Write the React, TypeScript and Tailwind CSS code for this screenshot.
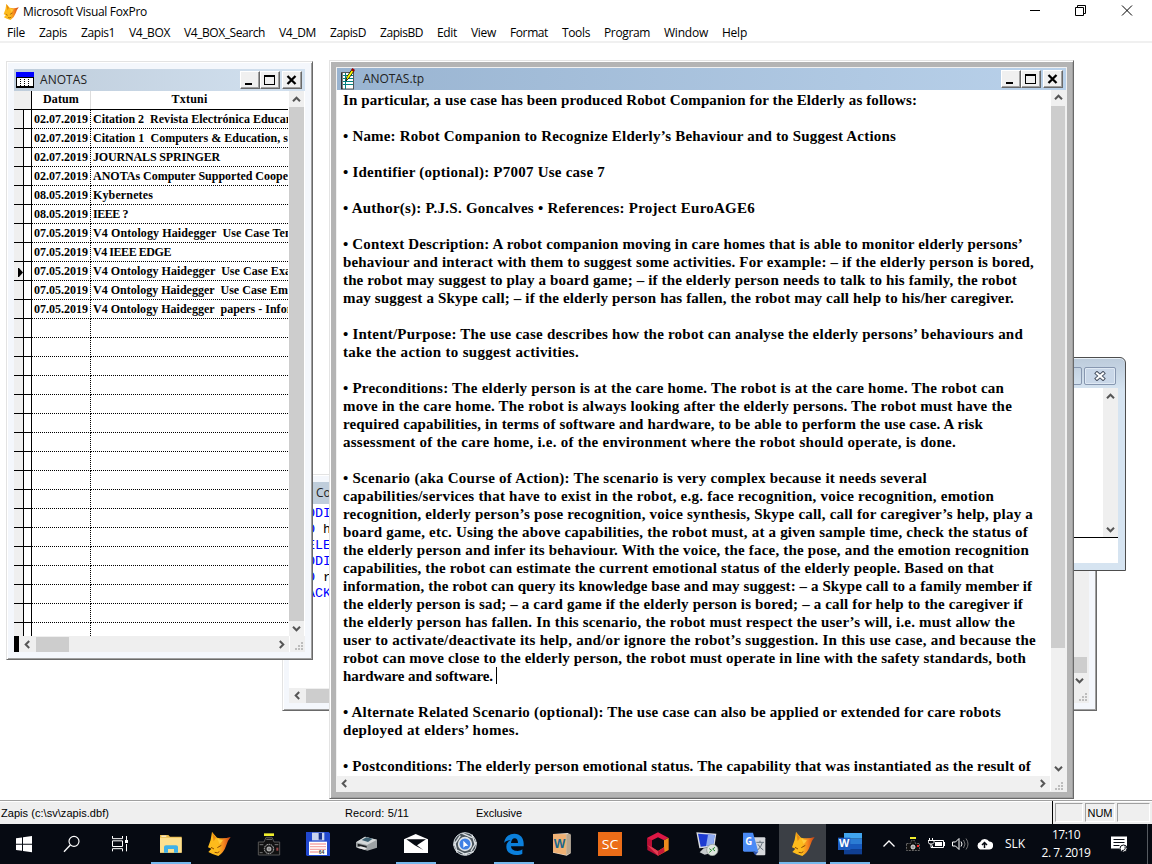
import { ReactNode, useLayoutEffect, useRef, useState } from 'react';
import clsx from 'clsx';

const UI = "font-['Open_Sans','Noto_Sans',sans-serif]";
const SERIF = "font-['Liberation_Serif',serif]";
const SANS = "font-['Liberation_Sans',sans-serif]";
const MONO = "font-['Liberation_Mono',monospace]";

// [text, width in px], an empty text is a blank line
const NOTE_LINES: [string, number][] = [
  ['In particular, a use case has been produced Robot Companion for the Elderly as follows:', 574],
  ['', 0],
  ['• Name: Robot Companion to Recognize Elderly’s Behaviour and to Suggest Actions', 553],
  ['', 0],
  ['• Identifier (optional): P7007 Use case 7', 262],
  ['', 0],
  ['• Author(s): P.J.S. Goncalves • References: Project EuroAGE6', 412],
  ['', 0],
  ['• Context Description: A robot companion moving in care homes that is able to monitor elderly persons’', 680],
  ['behaviour and interact with them to suggest some activities. For example: – if the elderly person is bored,', 691],
  ['the robot may suggest to play a board game; – if the elderly person needs to talk to his family, the robot', 674],
  ['may suggest a Skype call; – if the elderly person has fallen, the robot may call help to his/her caregiver.', 671],
  ['', 0],
  ['• Intent/Purpose: The use case describes how the robot can analyse the elderly persons’ behaviours and', 680],
  ['take the action to suggest activities.', 236],
  ['', 0],
  ['• Preconditions: The elderly person is at the care home. The robot is at the care home. The robot can', 661],
  ['move in the care home. The robot is always looking after the elderly persons. The robot must have the', 669],
  ['required capabilities, in terms of software and hardware, to be able to perform the use case. A risk', 640],
  ['assessment of the care home, i.e. of the environment where the robot should operate, is done.', 613],
  ['', 0],
  ['• Scenario (aka Course of Action): The scenario is very complex because it needs several', 584],
  ['capabilities/services that have to exist in the robot, e.g. face recognition, voice recognition, emotion', 651],
  ['recognition, elderly person’s pose recognition, voice synthesis, Skype call, call for caregiver’s help, play a', 690],
  ['board game, etc. Using the above capabilities, the robot must, at a given sample time, check the status of', 685],
  ['the elderly person and infer its behaviour. With the voice, the face, the pose, and the emotion recognition', 686],
  ['capabilities, the robot can estimate the current emotional status of the elderly people. Based on that', 651],
  ['information, the robot can query its knowledge base and may suggest: – a Skype call to a family member if', 689],
  ['the elderly person is sad; – a card game if the elderly person is bored; – a call for help to the caregiver if', 680],
  ['the elderly person has fallen. In this scenario, the robot must respect the user’s will, i.e. must allow the', 672],
  ['user to activate/deactivate its help, and/or ignore the robot’s suggestion. In this use case, and because the', 693],
  ['robot can move close to the elderly person, the robot must operate in line with the safety standards, both', 683],
  ['hardware and software.', 150],
  ['', 0],
  ['• Alternate Related Scenario (optional): The use case can also be applied or extended for care robots', 658],
  ['deployed at elders’ homes.', 176],
  ['', 0],
  ['• Postconditions: The elderly person emotional status. The capability that was instantiated as the result of', 688],
];
const CARET_LINE = 32;

const RECORDS: [string, string, number][] = [
  ['02.07.2019', 'Citation 2  Revista Electrónica Educar', 198],
  ['02.07.2019', 'Citation 1  Computers & Education, s', 195],
  ['02.07.2019', 'JOURNALS SPRINGER', 127],
  ['02.07.2019', 'ANOTAs Computer Supported Coope', 195],
  ['08.05.2019', 'Kybernetes', 60],
  ['08.05.2019', 'IEEE ?', 35],
  ['07.05.2019', 'V4 Ontology Haidegger  Use Case Tem', 202],
  ['07.05.2019', 'V4 IEEE EDGE', 78],
  ['07.05.2019', 'V4 Ontology Haidegger  Use Case Exa', 198],
  ['07.05.2019', 'V4 Ontology Haidegger  Use Case Em', 195],
  ['07.05.2019', 'V4 Ontology Haidegger  papers - Infor', 199],
];
const CURRENT_RECORD = 8;
const ROW_COUNT = 28;

const MENU: [string, string, number][] = [
  ['File', 'w-8', 18],
  ['Zapis', 'w-[42px]', 28],
  ['Zapis1', 'w-12', 34],
  ['V4_BOX', 'w-[55px]', 41],
  ['V4_BOX_Search', 'w-[95px]', 81],
  ['V4_DM', 'w-[51px]', 37],
  ['ZapisD', 'w-[50px]', 36],
  ['ZapisBD', 'w-[57px]', 43],
  ['Edit', 'w-[34px]', 20],
  ['View', 'w-[39px]', 25],
  ['Format', 'w-[52px]', 38],
  ['Tools', 'w-[42px]', 28],
  ['Program', 'w-[60px]', 46],
  ['Window', 'w-[58px]', 44],
  ['Help', 'w-[30px]', 25],
];

// Spreads the letters so that the text takes exactly `width` pixels
function Fit({ text, width, className }: { text: string; width: number; className?: string }) {
  const ref = useRef<HTMLSpanElement>(null);
  const [spacing, setSpacing] = useState(0);

  useLayoutEffect(() => {
    if (!ref.current || !text) return;
    const natural = ref.current.getBoundingClientRect().width;
    setSpacing((width - natural) / text.length);
  }, [text, width]);

  return (
    <span ref={ref} className={clsx('inline-block whitespace-pre', className)} style={{ letterSpacing: spacing }}>
      {text}
    </span>
  );
}

function Arrow({ dir }: { dir: 'up' | 'down' | 'left' | 'right' }) {
  const rotate = { up: 0, right: 90, down: 180, left: 270 }[dir];
  return (
    <svg width="9" height="9" viewBox="0 0 9 9" className="shrink-0">
      <path d="M1 6.2 4.5 2.7 8 6.2" fill="none" stroke="#555" strokeWidth="2" transform={`rotate(${rotate} 4.5 4.5)`} />
    </svg>
  );
}

function Grip() {
  const dots = [[6, 0], [3, 3], [6, 3], [0, 6], [3, 6], [6, 6]];
  return (
    <svg width="9" height="9" className="shrink-0">
      {dots.map(([x, y]) => (
        <rect key={`${x}-${y}`} x={x} y={y} width="2" height="2" fill="#bdbdbd" />
      ))}
    </svg>
  );
}

function WindowButton({ kind }: { kind: 'min' | 'max' | 'close' }) {
  return (
    <button className="flex h-[18px] w-5 items-center justify-center border border-t-white border-l-white border-r-[#696969] border-b-[#696969] bg-[#f0f0f0] shadow-[inset_-1px_-1px_0_#a0a0a0]">
      <svg width="12" height="12" viewBox="0 0 12 12" shapeRendering="crispEdges">
        {kind === 'min' && <rect x="1" y="9" width="7" height="2" />}
        {kind === 'max' && <path d="M.5 2H10.5M.5 1V10.5H10.5V1" fill="none" stroke="#000" strokeWidth="1" />}
        {kind === 'max' && <rect x="0" y="1" width="11" height="2" />}
        {kind === 'close' && <path d="M1.500 2 9.500 10M9.500 2 1.500 10" stroke="#000" strokeWidth="2.300" shapeRendering="auto" />}
      </svg>
    </button>
  );
}

function TitleBar({ icon, className, children }: { icon: ReactNode; className: string; children: ReactNode }) {
  return (
    <div className={clsx('flex h-[22px] shrink-0 items-center', className)}>
      {icon}
      <div className={clsx('flex-1 text-xs text-[#222]', UI)}>{children}</div>
      <div className="mr-[3px] flex">
        <WindowButton kind="min" />
        <WindowButton kind="max" />
        <div className="w-0.5" />
        <WindowButton kind="close" />
      </div>
    </div>
  );
}

function TableIcon() {
  return (
    <svg width="18" height="16" viewBox="0 0 18 16" shapeRendering="crispEdges" className="mr-1.5 ml-0.5">
      <rect width="18" height="16" fill="#000" />
      <rect width="18" height="5" fill="#00f" />
      <rect x="1" y="6" width="3" height="8" fill="#fff" />
      <rect x="5" y="6" width="3" height="8" fill="#fff" />
      <rect x="9" y="6" width="3" height="8" fill="#fff" />
      <rect x="13" y="6" width="4" height="8" fill="#fff" />
      <path d="M4.500 6v8M8.500 6v8M12.500 6v8" stroke="#fff" strokeDasharray="1 1" />
    </svg>
  );
}

function NoteIcon() {
  return (
    <svg width="14" height="22" viewBox="0 0 14 22" className="mr-2 ml-1">
      <rect x=".5" y="4.500" width="12" height="16.500" fill="#fff" stroke="#555" />
      <path d="M1 5v16" stroke="#000" />
      <path d="M2 7.500h10M2 10.500h10M2 13.500h10M2 16.500h10M4.500 5v16" stroke="#008080" />
      <path d="M5 13 6 8.500 11 1.500 13 3 8 10z" fill="#ff0" stroke="#000" strokeWidth=".8" />
      <path d="m10 2 1.500-2L14 2l-1.500 2z" fill="#900" />
    </svg>
  );
}

function BrowseWindow() {
  return (
    <div className="absolute top-[61px] left-[6px] flex h-[599px] w-[307px] flex-col border border-t-[#e3e3e3] border-l-[#e3e3e3] border-r-[#696969] border-b-[#696969] bg-[#f4f7fc] pt-[7px] pr-[7px] pb-1.5 pl-[7px] shadow-[inset_1px_1px_0_#fff,inset_-1px_-1px_0_#a0a0a0]">
      <TitleBar icon={<TableIcon />} className="bg-linear-to-r from-[#bfcddb] to-[#d2e1f0]">
        <Fit text="ANOTAS" width={47} />
      </TitleBar>
      <div className={clsx('flex h-[545px] bg-white text-xs font-bold', SERIF)}>
        <div className="w-[274px] overflow-hidden">
          <div className="flex h-[19px] border-b border-black leading-[17px]">
            <div className="w-[18px] border-r border-black bg-[#efefef]" />
            <div className="w-[59px] border-r border-[#ddd] text-center">
              <Fit text="Datum" width={36} />
            </div>
            <div className="flex-1 text-center">
              <Fit text="Txtuni" width={36} />
            </div>
          </div>
          {Array.from({ length: ROW_COUNT }, (_, i) => (
            <div key={i} className="flex h-[19px] leading-[19px]">
              <div className="flex w-[10px] items-center justify-end border-r border-b border-black bg-[#efefef] pt-0.5">
                {i === CURRENT_RECORD && (
                  <svg width="5" height="9">
                    <path d="M0 0h1l4 4.500L1 9H0z" />
                  </svg>
                )}
              </div>
              <div className="w-2 border-r border-b border-black" />
              <div className="w-[59px] border-r border-b border-dotted border-black pl-[2px] whitespace-nowrap">
                {RECORDS[i] && <Fit text={RECORDS[i][0]} width={54} />}
              </div>
              <div className="h-[19px] flex-1 overflow-hidden border-b border-dotted border-black pl-[2px] whitespace-nowrap">
                {RECORDS[i] && <Fit text={RECORDS[i][1]} width={RECORDS[i][2]} />}
              </div>
            </div>
          ))}
        </div>
        <div className="ml-px flex w-[15px] flex-col items-center bg-[#efefef] pt-1">
          <Arrow dir="up" />
          <div className="mt-[3px] h-[514px] w-full bg-[#cdcdcd]" />
          <div className="mt-[3px]">
            <Arrow dir="down" />
          </div>
        </div>
      </div>
      <div className="z-10 flex h-4 items-center bg-[#efefef]">
        <div className="h-full w-[5px] bg-black" />
        <div className="w-1" />
        <Arrow dir="left" />
        <div className="ml-1 h-[15px] w-[33px] bg-[#cdcdcd]" />
        <div className="flex-1" />
        <Arrow dir="right" />
        <div className="ml-[3px] h-full w-px bg-white" />
        <div className="mr-px ml-[5px] pt-1">
          <Grip />
        </div>
      </div>
    </div>
  );
}

function CommandWindow() {
  const commands: [string, string][] = [
    ['MODI', ''],
    ['DO', ' h'],
    ['SELE', ''],
    ['MODI', ''],
    ['DO', ' r'],
    ['PACK', ''],
  ];
  return (
    <div className="absolute top-[474px] left-[282px] flex h-[237px] w-[815px] flex-col border border-t-[#e3e3e3] border-l-[#e3e3e3] border-r-[#696969] border-b-[#696969] bg-[#f4f7fc] pt-[7px] pr-[7px] pb-1.5 pl-1.5 shadow-[inset_1px_1px_0_#fff,inset_-1px_-1px_0_#a0a0a0]">
      <div className={clsx('h-[22px] bg-[#bfcddb] pl-[27px] text-xs leading-[21px] text-[#222]', UI)}>Co</div>
      <div className="flex h-[184px] bg-white">
        <div className={clsx('flex-1 pt-0.5 pl-[10px] text-[13.33px] leading-4', MONO)}>
          {commands.map(([keyword, rest], i) => (
            <div key={i} className="whitespace-pre">
              <span className="text-[#0000ff]">{keyword}</span>
              {rest}
            </div>
          ))}
        </div>
        <div className="flex w-[17px] flex-col items-center justify-end bg-[#efefef] pr-0.5 pb-[3px]">
          <div className="mb-[3px] h-4 w-full bg-[#cdcdcd]" />
          <Arrow dir="down" />
        </div>
      </div>
      <div className="flex h-[15px] items-center bg-[#efefef] pr-px pl-1">
        <Arrow dir="left" />
        <div className="ml-1 h-[14px] w-24 bg-[#cdcdcd]" />
        <div className="flex-1" />
        <div className="pt-1">
          <Grip />
        </div>
      </div>
    </div>
  );
}

function ToolWindow() {
  return (
    <div className="absolute top-[357px] left-[900px] h-[214px] w-[226px] rounded-t-md border border-[#4d4d4d] bg-[#d6e4f1] bg-linear-to-b from-[#bccbdb] to-[#d6e4f1] to-15% pr-[7px] pb-[7px] shadow-[inset_0_1px_0_#e9f1f8]">
      <div className="flex h-[30px] items-start justify-end gap-0.5 pt-[9px] pr-[2px]">
        <div className="h-[18px] w-8 rounded-[2px] border border-[#8797b0]" />
        <div className="flex h-[18px] w-8 items-center justify-center rounded-[2px] border border-[#8797b0] bg-[#c9d7e8] shadow-[inset_0_0_0_1px_#dfe9f4]">
          <svg width="12" height="10" viewBox="0 0 12 10">
            <path d="m1.500 1 9 8M10.500 1l-9 8" stroke="#4c5666" strokeWidth="4" />
            <path d="m2.200 1.700 7.600 6.600M9.800 1.700 2.200 8.300" stroke="#fff" strokeWidth="2" />
          </svg>
        </div>
      </div>
      <div className="flex h-[149px] bg-white">
        <div className="flex-1" />
        <div className="flex w-[15px] flex-col items-center justify-between bg-[#efefef] pt-1 pb-[3px]">
          <Arrow dir="up" />
          <Arrow dir="down" />
        </div>
      </div>
      <div className="h-[26px] border-t border-black bg-white" />
    </div>
  );
}

function EditorWindow() {
  return (
    <div className="absolute top-[60px] left-[329px] flex h-[739px] w-[745px] flex-col border border-t-[#e3e3e3] border-l-[#e3e3e3] border-r-[#696969] border-b-[#696969] bg-[#b4b4b4] p-1.5 shadow-[inset_1px_1px_0_#fff,inset_-1px_-1px_0_#a0a0a0]">
      <div className="flex flex-1 flex-col border border-[#f0f0f0] bg-[#f0f0f0]">
        <TitleBar icon={<NoteIcon />} className="bg-linear-to-r from-[#99b4d1] to-[#b9d1ea]">
          <Fit text="ANOTAS.tp" width={61} />
        </TitleBar>
        <div className="flex h-[686px]">
          <div className={clsx('w-[714px] overflow-hidden bg-white pt-[1px] pl-1.5 text-[15px] leading-[18px] font-bold', SERIF)}>
            {NOTE_LINES.map(([text, width], i) => (
              <div key={i} className="flex h-[18px] whitespace-pre">
                <Fit text={text} width={width} />
                {i === CARET_LINE && <div className="ml-[3px] h-[17px] w-px bg-black" />}
              </div>
            ))}
          </div>
          <div className="flex w-[14px] flex-col items-center pt-[3px]">
            <Arrow dir="up" />
            <div className="mt-1 h-[542px] w-full bg-[#cdcdcd]" />
            <div className="flex-1" />
            <div className="mb-[3px]">
              <Arrow dir="down" />
            </div>
          </div>
        </div>
        <div className="flex flex-1 items-center pl-[3px]">
          <Arrow dir="left" />
          <div className="flex-1" />
          <Arrow dir="right" />
          <div className="ml-[3px] h-full w-px bg-white" />
          <div className="mr-0.5 ml-1 pt-1.5">
            <Grip />
          </div>
        </div>
      </div>
    </div>
  );
}

function FoxIcon({ size }: { size: number }) {
  return (
    <svg width={size} height={size} viewBox="0 0 72 72">
      <defs>
        <linearGradient id="fox" x1="0" y1="0" x2="1" y2="0">
          <stop offset=".45" stopColor="#fdbb1c" />
          <stop offset=".7" stopColor="#f58420" />
          <stop offset="1" stopColor="#c43d12" />
        </linearGradient>
      </defs>
      <path d="M15 0 30 17Q50 22 71 15 60 28 57 42 51 61 34 72 16 67 4 60L13 50 3 46Q13 24 15 0Z" fill="url(#fox)" />
      <path d="M15 0 27 17 20 28Z" fill="#e88b12" />
      <path d="m12 46 9 5M31 47l12-7M23 61q9 4 14-2" fill="none" stroke="#8c4a05" strokeWidth="3" />
      <path d="M31 20q12 5 17 5L38 37Z" fill="#ffcc3a" />
    </svg>
  );
}

function Icon({ children, size = 24 }: { children: ReactNode; size?: number }) {
  return (
    <svg width={size} height={size} viewBox="0 0 72 72">
      {children}
    </svg>
  );
}

const startIcon = (
  <Icon>
    <path d="M12 19 30 16.500V35H12ZM33 16 60 12V35H33ZM12 38H30V56.500L12 54ZM33 38H60V61L33 57Z" fill="#fff" />
  </Icon>
);
const searchIcon = (
  <Icon>
    <circle cx="42" cy="28" r="15" fill="none" stroke="#fff" strokeWidth="3.500" />
    <path d="M31 39 12 59" stroke="#fff" strokeWidth="4" />
  </Icon>
);
const taskViewIcon = (
  <Icon>
    <path d="M13.500 12v8h30v-8M13.500 58v-8h30v8M13.500 26.500h30v17h-30zM55.500 12v12M55.500 36v22" fill="none" stroke="#fff" strokeWidth="3" />
    <path d="M51 24h9v9h-9z" fill="#fff" />
  </Icon>
);
const explorerIcon = (
  <Icon>
    <path d="M3 9h25l5 5h35v48H3z" fill="#e9b949" />
    <path d="M3 17h65v45H3z" fill="#fde08f" />
    <path d="M15 62V45q0-5 6-5h30q6 0 6 5v17H45V51H27v11z" fill="#3fb1e8" />
    <path d="M7 11h15v3H7z" fill="#fff" />
  </Icon>
);
const cameraIcon = (
  <Icon>
    <path d="M21 4h30v8H21z" fill="#f0ee2e" />
    <path d="M27 16h18l6 14h17v39H4V30h17z" fill="#111" stroke="#555" strokeWidth="3" />
    <circle cx="36" cy="51" r="14" fill="#222" stroke="#bbb" strokeWidth="3" strokeDasharray="5 2" />
    <circle cx="36" cy="51" r="6" fill="#888" stroke="#eee" strokeWidth="2" />
    <path d="M8 38h11M53 38h11M28 22h17M8 62h9" stroke="#777" strokeWidth="3" />
    <path d="M58 47h6v9h-6z" fill="#944" />
  </Icon>
);
const floppyIcon = (
  <Icon>
    <path d="M0 0h68l4 4v68H3l-3-3z" fill="#2148cf" />
    <path d="M18 2h37v23H18z" fill="#c9d4ee" />
    <path d="M38 3h10v20H38z" fill="#17318e" />
    <path d="M9 29h54v40H9z" fill="#fff" />
    <path d="M12 36h48M12 44h48M12 52h48M12 60h25" stroke="#f3a9a9" strokeWidth="4" />
    <text x="38" y="67" fontSize="15" fontWeight="bold" fontFamily="Liberation Sans" fill="#333">64</text>
  </Icon>
);
const scannerIcon = (
  <Icon>
    <path d="m3 31 27-17 36 9v24L37 56 3 46z" fill="#9da2a4" />
    <path d="m3 31 27-17 36 9-30 16z" fill="#d3d7d8" />
    <path d="m20 24 14-8 19 4-14 10z" fill="#3c5f70" />
    <path d="m8 35 27 7v7L8 43z" fill="#1b1f21" />
    <path d="m5 47 12-4 20 5-8 5z" fill="#e5e5e5" />
  </Icon>
);
const mailIcon = (
  <Icon>
    <path d="M0 22 35 6 72 22V63H0Z" fill="#fff" />
    <path d="M7 22H66L39 40 58 54 32 40Z" fill="#060a12" />
  </Icon>
);
const shutterIcon = (
  <Icon>
    <circle cx="36" cy="36" r="34" fill="#4a545b" stroke="#d2d8dc" strokeWidth="3" />
    <path d="M28 4 57 17M57 8l10 31M70 30 54 57M62 59 29 67M42 69 11 54M12 62 5 29M2 41 22 11" stroke="#dfe4e7" strokeWidth="4" />
    <circle cx="36" cy="36" r="19" fill="#3f80e4" stroke="#dfe4e7" strokeWidth="5" />
    <path d="M31 26v21l6-5 9-1z" fill="#fff" />
  </Icon>
);
const edgeIcon = (
  <Icon>
    <path d="M6 33C9 14 22 5 37 5 55 5 65 18 65 34V43H27C28 53 36 57 46 57 53 57 57 55 61 52V65C56 68 51 69 43 69 25 69 13 59 13 44 13 35 18 28 26 24 18 25 11 28 6 33ZM27 33H48C48 24 44 19 38 19 32 19 28 25 27 33Z" fill="#0b80dc" />
  </Icon>
);
const bookIcon = (
  <Icon>
    <path d="m6 6 44-3 9 5v56l-12 7L6 62z" fill="#e8dccb" />
    <path d="m6 6 40 1v62L6 61z" fill="#efb174" />
    <path d="m46 7 12-2v58l-12 6z" fill="#b9a78e" />
    <text x="8" y="49" fontSize="37" fontWeight="bold" fontFamily="Liberation Sans" fill="#17668c">W</text>
  </Icon>
);
const scIcon = (
  <Icon>
    <path d="M0 0h72v72H0z" fill="#eb6d18" />
    <text x="11" y="50" fontSize="39" textLength="50" lengthAdjust="spacingAndGlyphs" fontFamily="Open Sans" fill="#fff">SC</text>
  </Icon>
);
const hexIcon = (
  <Icon>
    <path d="M36 1 67 17 54 25 36 16 18 25V34L4 42V17Z" fill="#dd1745" />
    <path d="M4 19 18 25V46L36 57V71L4 54Z" fill="#b80f35" />
    <path d="m4 39 14 7 18 11v14z" fill="#e33d51" />
    <path d="M54 25 68 17V54L36 71V57L54 46Z" fill="#ed8b1c" />
    <path d="m36 57 18-11 2 14-20 11z" fill="#c61837" />
  </Icon>
);
const remoteIcon = (
  <Icon>
    <path d="m1 1 60 4-6 40-45 4z" fill="#d8dce2" />
    <path d="m6 5 50 4-5 31-37 4z" fill="#1d3bd1" />
    <path d="m36 8 20 1-5 31-21 2z" fill="#8eabf0" />
    <path d="m23 49 16-2 3 11 12 3-28 7-15-7z" fill="#c7cbcd" />
    <circle cx="49" cy="54" r="17" fill="#dfe5df" stroke="#8d9690" strokeWidth="2" />
    <path d="m40 50 7 5-7 6M57 46l-7 5 7 6" fill="none" stroke="#258b2e" strokeWidth="3" />
  </Icon>
);
const translateIcon = (
  <Icon>
    <path d="M28 16h39q3 0 3 3v48q0 3-3 3H43z" fill="#d5d8dc" />
    <path d="M4 2h29l16 57H7q-4 0-4-4V6q0-4 1-4z" fill="#4a8af4" />
    <path d="m33 59 16 0-9 11z" fill="#3056b0" />
    <text x="10" y="39" fontSize="29" fontWeight="bold" fontFamily="Open Sans" fill="#fff">G</text>
    <path d="M43 31h23M54 26v5M61 32Q57 46 47 54M48 37q6 11 16 17" fill="none" stroke="#697680" strokeWidth="3" />
  </Icon>
);
const wordIcon = (
  <Icon>
    <path d="M18 3h54v17H18z" fill="#41a5ee" />
    <path d="M18 20h54v16H18z" fill="#2b7cd3" />
    <path d="M18 36h54v15H18z" fill="#185abd" />
    <path d="M18 51h54v16H18z" fill="#103f91" />
    <path d="M0 17h37v37H0z" fill="#1c5cc0" />
    <text x="3" y="46" fontSize="30" textLength="31" lengthAdjust="spacingAndGlyphs" fontWeight="bold" fontFamily="Open Sans" fill="#fff">W</text>
  </Icon>
);

function TaskButton({ width, open, active, children }: { width: string; open?: boolean; active?: boolean; children: ReactNode }) {
  return (
    <button className={clsx('flex h-10 shrink-0 flex-col items-center', width, active && 'bg-[#3b3f45]')}>
      <div className="flex h-[38px] items-center pt-0.5">{children}</div>
      {open && <div className={clsx('h-0.5 bg-[#76b9ed]', active ? 'w-full' : 'w-10')} />}
    </button>
  );
}

function Taskbar() {
  return (
    <div className="flex h-10 bg-[#060a12]">
      <TaskButton width="w-12">{startIcon}</TaskButton>
      <TaskButton width="w-12">{searchIcon}</TaskButton>
      <TaskButton width="w-12">{taskViewIcon}</TaskButton>
      <TaskButton width="ml-[3px] w-12" open>{explorerIcon}</TaskButton>
      <TaskButton width="w-12"><FoxIcon size={24} /></TaskButton>
      <TaskButton width="w-[52px]">{cameraIcon}</TaskButton>
      <TaskButton width="w-[46px]">{floppyIcon}</TaskButton>
      <TaskButton width="w-[52px]">{scannerIcon}</TaskButton>
      <TaskButton width="w-[46px]" open>{mailIcon}</TaskButton>
      <TaskButton width="w-[52px]">{shutterIcon}</TaskButton>
      <TaskButton width="w-[46px]" open>{edgeIcon}</TaskButton>
      <TaskButton width="w-[52px]">{bookIcon}</TaskButton>
      <TaskButton width="w-[42px]">{scIcon}</TaskButton>
      <TaskButton width="w-[54px]">{hexIcon}</TaskButton>
      <TaskButton width="w-[46px]">{remoteIcon}</TaskButton>
      <TaskButton width="w-[46px]">{translateIcon}</TaskButton>
      <TaskButton width="ml-0.5 w-[47px]" open active><FoxIcon size={24} /></TaskButton>
      <TaskButton width="ml-1 w-10" open>{wordIcon}</TaskButton>

      {/* Tray */}
      <div className={clsx('flex flex-1 items-center pl-[7px] text-xs text-white', UI)}>
        <div className="w-6 pl-0.5">
          <svg width="20" height="20" viewBox="0 0 20 20">
            <path d="m4.500 12.500 5.500-5.500 5.500 5.500" fill="none" stroke="#fff" strokeWidth="1.300" />
          </svg>
        </div>
        <div className="w-6 pl-1">
          <svg width="16" height="16" viewBox="0 0 16 16">
            <path d="M5 1h6v2H5z" fill="#f0ee2e" />
            <path d="M1.500 7.500h4l1-3h3l1 3h4v7h-13z" fill="#111" stroke="#666" strokeDasharray="2 1" />
            <circle cx="8" cy="11" r="2" fill="#999" stroke="#ddd" />
            <path d="M12 9h2v2h-2z" fill="#f22" />
          </svg>
        </div>
        <div className="w-6 pl-[3px]">
          <svg width="17" height="14" viewBox="0 0 17 14">
            <path d="M6 3.500h9.500v7H4.500v-2M1.500 1v2M4.500 1v2M0 3.500h6v2l-1.500 1.500h-3L.5 5.500zM3 7v3.500h2" fill="none" stroke="#fff" />
            <path d="M7 5h7v4H7zM16 5h1v4h-1z" fill="#fff" />
          </svg>
        </div>
        <div className="w-6 pl-[3px]">
          <svg width="17" height="14" viewBox="0 0 17 14">
            <path d="M.5 5h3L7 1.500v11L3.500 9h-3z" fill="none" stroke="#fff" />
            <path d="M9 4.500q2 2.500 0 5" fill="none" stroke="#fff" />
            <path d="M11.500 3q3 4 0 8M14 1.500q4 5.500 0 11" fill="none" stroke="#777" />
          </svg>
        </div>
        <div className="w-8 pl-[3px]">
          <svg width="17" height="12" viewBox="0 0 17 12">
            <path d="M4 11.500a4 4 0 0 1 .2-7.500 5 5 0 0 1 9-.5 4 4 0 0 1-.2 8z" fill="#fff" />
            <path d="M8.500 10V5M6 7l2.500-2.500L11 7" fill="none" stroke="#060a12" strokeWidth="1.500" />
          </svg>
        </div>
        <div className="w-[36px]">
          <Fit text="SLK" width={20} />
        </div>
        <div className="flex w-[50px] flex-col items-center text-[12px] leading-[18px]">
          <Fit text="17:10" width={28} />
          <Fit text="2. 7. 2019" width={49} />
        </div>
        <div className="ml-5 w-[36px]">
          <svg width="17" height="17" viewBox="0 0 17 17">
            <path d="M0 .5h16v12h-5v3l-3-3H0z" fill="#fff" />
            <path d="M2.500 3.500h11M2.500 6.500h11M2.500 9.500h6" stroke="#060a12" />
            <circle cx="12.500" cy="12.500" r="3.500" fill="#fff" stroke="#060a12" />
            <path d="M11 14.500q4 0 3-4" fill="none" stroke="#060a12" />
          </svg>
        </div>
        <div className="h-10 w-px bg-[#555a60]" />
      </div>
    </div>
  );
}

export default function App() {
  return (
    <div className="relative flex h-[864px] w-[1152px] flex-col overflow-hidden bg-white text-black">
      {/* Title bar */}
      <div className={clsx('flex h-6 items-center pl-[3px] text-xs', UI)}>
        <FoxIcon size={16} />
        <div className="ml-1 flex-1">
          <Fit text="Microsoft Visual FoxPro" width={124} />
        </div>
        <svg width="104" height="13" viewBox="0 0 104 13" className="mr-[19px] mb-[3px]">
          <path d="M1 6.500h10M46.500 3.500h8v8h-8zM48.500 3.500v-2h8v8h-2M93 1.500l10 10M103 1.500l-10 10" fill="none" stroke="#000" />
        </svg>
      </div>

      {/* Menu */}
      <div className={clsx('flex h-[19px] items-center border-b-2 border-[#f0f0f0] pl-[7px] text-xs leading-4', UI)}>
        {MENU.map(([label, cell, width]) => (
          <div key={label} className={cell}>
            <Fit text={label} width={width} />
          </div>
        ))}
      </div>

      {/* Workspace */}
      <div className="flex-1">
        <CommandWindow />
        <ToolWindow />
        <EditorWindow />
        <BrowseWindow />
      </div>

      {/* Status bar */}
      <div className={clsx('flex h-6 border-t border-[#a0a0a0] bg-[#efefef] text-[11px] leading-[22px] shadow-[inset_0_1px_0_#fff]', SANS)}>
        <div className="w-[345px] pt-px pl-px">
          <Fit text="Zapis (c:\sv\zapis.dbf)" width={108} />
        </div>
        <div className="w-[131px] pt-px">
          <Fit text="Record: 5/11" width={64} />
        </div>
        <div className="flex-1 pt-px">
          <Fit text="Exclusive" width={46} />
        </div>
        <div className="flex gap-0.5 border-l border-black pt-0.5 pb-0.5 pl-0.5 leading-[18px]">
          <div className="w-7 border border-t-[#a0a0a0] border-l-[#a0a0a0] border-r-white border-b-white" />
          <div className="w-[30px] border border-t-[#a0a0a0] border-l-[#a0a0a0] border-r-white border-b-white text-center">
            <Fit text="NUM" width={25} />
          </div>
          <div className="mr-[2px] w-[33px] border border-t-[#a0a0a0] border-l-[#a0a0a0] border-r-white border-b-white" />
        </div>
      </div>

      <Taskbar />
    </div>
  );
}
